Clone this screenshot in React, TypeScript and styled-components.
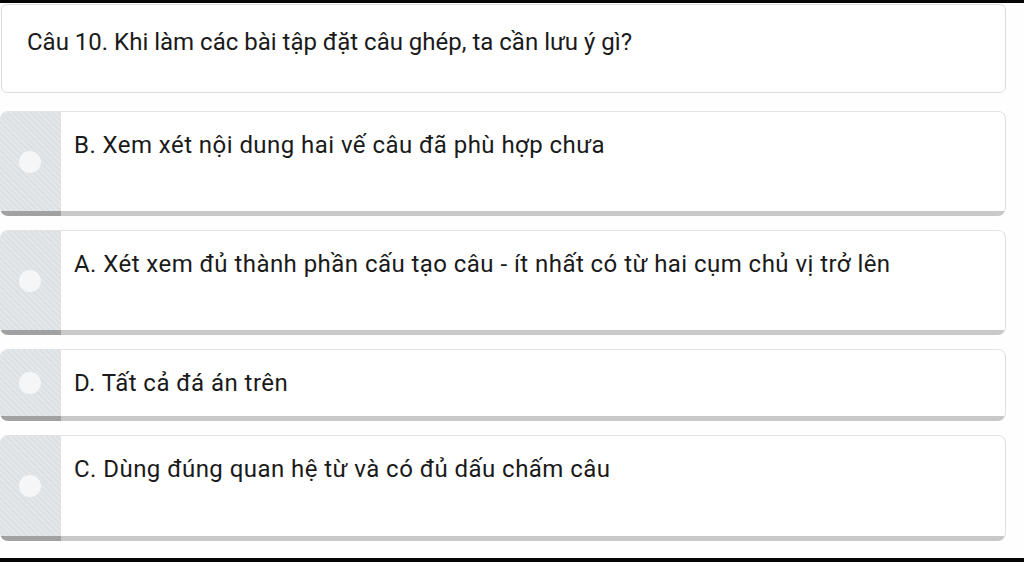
import React from "react";
import styled, { createGlobalStyle } from "styled-components";

const Global = createGlobalStyle`
  html, body { margin: 0; padding: 0; background: #ffffff; }
  body { font-family: Roboto, "Noto Sans", Arial, sans-serif; }
  * { box-sizing: border-box; }
`;

const Page = styled.div`
  width: 1024px;
  height: 562px;
  display: flex;
  flex-direction: column;
  background: #fefefe;
  overflow: hidden;
`;

const Bar = styled.div<{ $h: number }>`
  height: ${(p) => p.$h}px;
  background: #050505;
  flex: none;
`;

const Content = styled.div`
  flex: 1;
  display: flex;
  flex-direction: column;
  padding: 1px 18px 0 0;
`;

const Question = styled.div`
  height: 89px;
  border: 1px solid #dcdcdc;
  border-radius: 6px;
  background: #ffffff;
  padding: 23px 0 0 25px;
  font-size: 24px;
  line-height: 28px;
  color: #1a1a1a;
  margin-bottom: 18px;
  margin-left: 1px;
`;

const List = styled.div`
  display: flex;
  flex-direction: column;
  gap: 14px;
`;

const Card = styled.div<{ $h: number }>`
  height: ${(p) => p.$h + 5}px;
  border-radius: 8px;
  overflow: hidden;
  display: flex;
  padding-bottom: 5px;
  border-top: 1px solid #e2e2e2;
  border-right: 1px solid #dedede;
`;

const Strip = styled.div`
  width: 61px;
  flex: none;
  display: flex;
  align-items: center;
  justify-content: center;
  padding-right: 2px;
  background: repeating-linear-gradient(
    45deg,
    #e4e7e9 0px,
    #e4e7e9 2px,
    #dde0e3 2px,
    #dde0e3 4px
  );
  box-shadow: 0 5px 0 #a1a1a1;
`;

const Dot = styled.div`
  width: 22px;
  height: 22px;
  border-radius: 50%;
  background: #f5f6f7;
`;

const Body = styled.div<{ $center: boolean }>`
  flex: 1;
  background: #ffffff;
  box-shadow: 0 5px 0 #c9c9c9;
  padding: ${(p) => (p.$center ? "0" : "19px")} 0 0 13px;
  display: flex;
  align-items: ${(p) => (p.$center ? "center" : "flex-start")};
  font-size: 24px;
  letter-spacing: 0.45px;
  color: #1a1a1a;
  line-height: 28px;
`;

const options = [
  { text: "B. Xem xét nội dung hai vế câu đã phù hợp chưa", h: 100, center: false },
  { text: "A. Xét xem đủ thành phần cấu tạo câu - ít nhất có từ hai cụm chủ vị trở lên", h: 100, center: false },
  { text: "D. Tất cả đá án trên", h: 67, center: true },
  { text: "C. Dùng đúng quan hệ từ và có đủ dấu chấm câu", h: 101, center: false },
];

export default function App() {
  return (
    <Page>
      <Global />
      <Bar $h={3} />
      <Content>
        <Question>Câu 10. Khi làm các bài tập đặt câu ghép, ta cần lưu ý gì?</Question>
        <List>
          {options.map((o) => (
            <Card key={o.text} $h={o.h}>
              <Strip>
                <Dot />
              </Strip>
              <Body $center={o.center}>{o.text}</Body>
            </Card>
          ))}
        </List>
      </Content>
      <Bar $h={4} style={{ marginTop: "auto" }} />
    </Page>
  );
}
